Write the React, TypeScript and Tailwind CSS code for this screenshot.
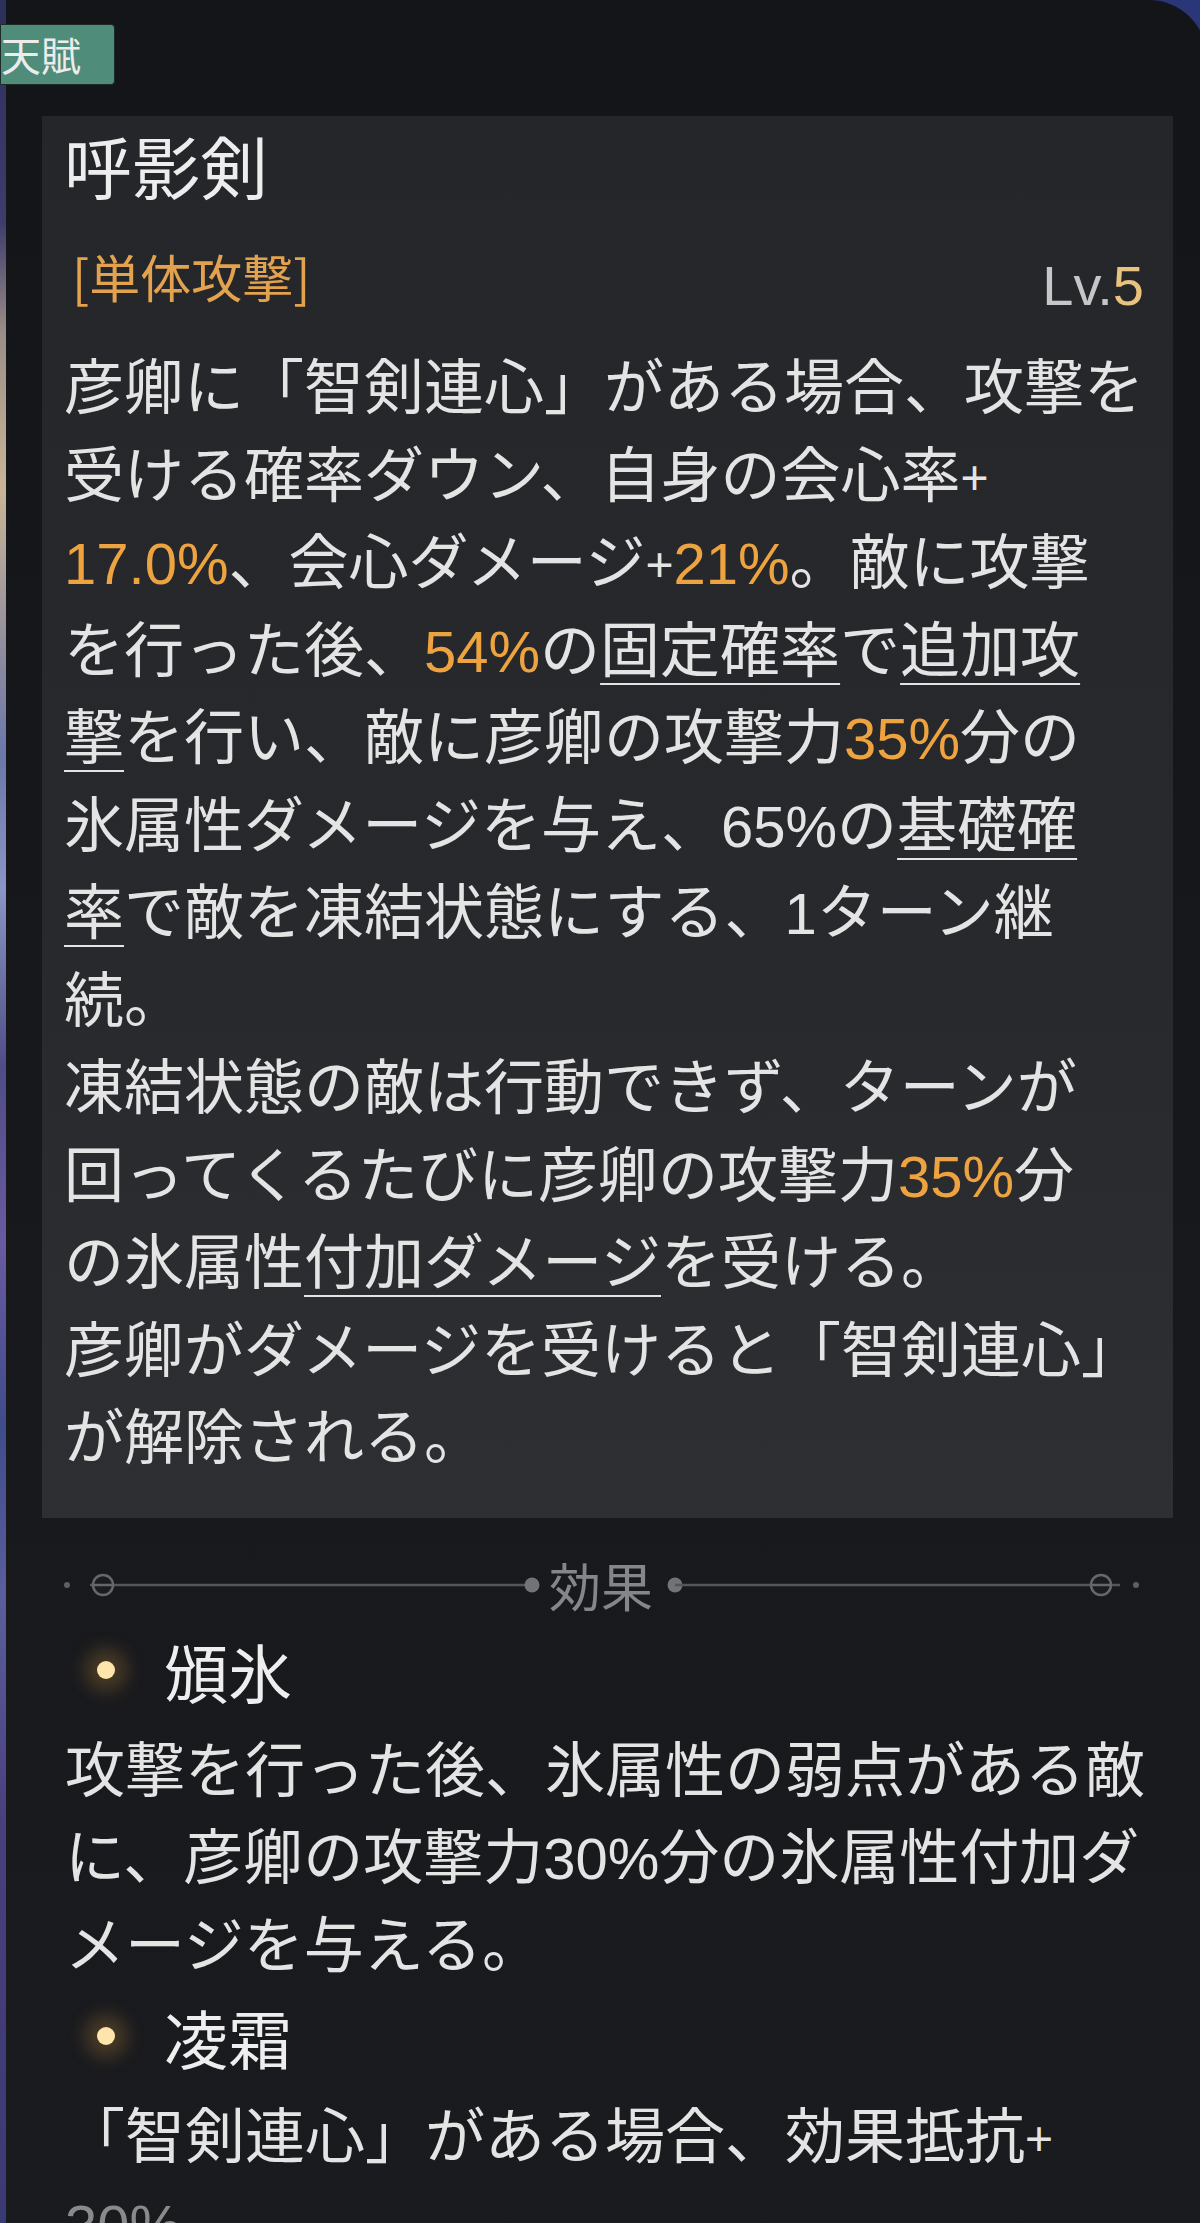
import React from "react";

type C = { children: React.ReactNode };

function N({ children, o }: { children: React.ReactNode; o?: boolean }) {
  return (
    <span
      className={
        o
          ? "font-[family-name:'Liberation_Sans',Arial,sans-serif] text-[58px] text-[#eda33f]"
          : "font-[family-name:'Liberation_Sans',Arial,sans-serif] text-[58px]"
      }
    >
      {children}
    </span>
  );
}

function P() {
  return (
    <span className="relative top-[-3px] font-[family-name:'Liberation_Sans',Arial,sans-serif] text-[48px]">+</span>
  );
}

function U({ children }: C) {
  return <span className="underline decoration-2 underline-offset-[11px]">{children}</span>;
}

function Line({ children }: C) {
  return <div className="h-[87.5px] leading-[87.5px] whitespace-nowrap">{children}</div>;
}

function Separator() {
  return (
    <div className="ml-[20px] mt-[47px] flex h-[40px] w-[1083px] items-center">
      <svg width="487" height="40" viewBox="0 0 487 40" className="shrink-0">
        <circle cx="5" cy="20" r="3" fill="#5e5f63" />
        <line x1="28" y1="20" x2="470" y2="20" stroke="#55565a" strokeWidth="2.5" />
        <circle cx="41" cy="20" r="10" fill="#1b1c20" stroke="#66676b" strokeWidth="2.5" />
        <line x1="31" y1="20" x2="51" y2="20" stroke="#66676b" strokeWidth="2.5" />
        <circle cx="470" cy="20" r="7.5" fill="#727377" />
      </svg>
      <span className="w-[104px] shrink-0 text-center text-[52px] leading-[40px] text-[#85868a]">効果</span>
      <svg width="492" height="40" viewBox="0 0 492 40" className="shrink-0">
        <circle cx="22" cy="20" r="7.5" fill="#727377" />
        <line x1="22" y1="20" x2="467" y2="20" stroke="#55565a" strokeWidth="2.5" />
        <circle cx="448" cy="20" r="10" fill="#1b1c20" stroke="#66676b" strokeWidth="2.5" />
        <line x1="438" y1="20" x2="458" y2="20" stroke="#66676b" strokeWidth="2.5" />
        <circle cx="483" cy="20" r="3" fill="#5e5f63" />
      </svg>
    </div>
  );
}

function ItemTitle({ children }: C) {
  return (
    <div className="flex h-[104px] items-center">
      <span className="ml-[32px] mr-[49px] h-[18px] w-[18px] shrink-0 rounded-full bg-[#ffe4ab] shadow-[0_0_18px_12px_rgba(190,140,60,0.3)]" />
      <span className="text-[64px] leading-[104px] text-[#eeeeee]">{children}</span>
    </div>
  );
}

export default function App() {
  return (
    <div className="relative flex h-[2223px] w-[1200px] overflow-hidden bg-[#2b3679] font-[family-name:'Noto_Sans_CJK_JP',sans-serif]">
      <div className="w-[6px] shrink-0 bg-[linear-gradient(180deg,#2c2f5a_0%,#3d3c6c_10%,#9c8e86_15%,#c9b596_22%,#8a88a0_30%,#6a78aa_34%,#8a96c4_40%,#4f4d86_48%,#6a5aa0_56%,#3e4c8c_64%,#5b5e9c_72%,#493f7d_82%,#3a3a72_100%)]" />
      <div className="relative flex flex-1 flex-col rounded-tr-[58px] bg-[linear-gradient(180deg,#141518_0%,#17181c_50%,#1a1b1f_100%)] pl-[36px] pr-[34px] pt-[116px]">
        {/* card */}
        <div className="flex flex-col bg-[linear-gradient(180deg,#25262a_0%,#28292d_60%,#2e2f33_100%)] pb-[41.5px] pl-[22px] pr-[29px] pt-[9px]">
          <div className="h-[80px] text-[68px] leading-[80px] text-[#ededed]">呼影剣</div>
          <div className="mt-[41px] flex h-[60px] justify-between">
            <span className="pl-[8px] text-[51px] leading-[60px] text-[#e3a24d]">[単体攻撃]</span>
            <span className="mt-[10px] font-[family-name:'Liberation_Sans',Arial,sans-serif] text-[56px] leading-[60px] text-[#c6c6c6]">
              Lv.<span className="text-[#e8c27f]">5</span>
            </span>
          </div>
          <div className="mt-[33px] text-[60px] text-[#e4e4e4]">
            <Line>彦卿に「智剣連心」がある場合、攻撃を</Line>
            <Line>
              受ける確率ダウン、自身の会心率<P />
            </Line>
            <Line>
              <N o>17.0%</N>、会心ダメージ<P />
              <N o>21%</N>。敵に攻撃
            </Line>
            <Line>
              を行った後、<N o>54%</N>の<U>固定確率</U>で<U>追加攻</U>
            </Line>
            <Line>
              <U>撃</U>を行い、敵に彦卿の攻撃力<N o>35%</N>分の
            </Line>
            <Line>
              氷属性ダメージを与え、<N>65%</N>の<U>基礎確</U>
            </Line>
            <Line>
              <U>率</U>で敵を凍結状態にする、<N>1</N>ターン継
            </Line>
            <Line>続。</Line>
            <Line>凍結状態の敵は行動できず、ターンが</Line>
            <Line>
              回ってくるたびに彦卿の攻撃力<N o>35%</N>分
            </Line>
            <Line>
              の氷属性<U>付加ダメージ</U>を受ける。
            </Line>
            <Line>彦卿がダメージを受けると「智剣連心」</Line>
            <Line>が解除される。</Line>
          </div>
        </div>

        <Separator />

        <div className="mt-[12.5px] flex flex-col pl-[23px] text-[60px] text-[#e4e4e4]">
          <ItemTitle>頒氷</ItemTitle>
          <Line>攻撃を行った後、氷属性の弱点がある敵</Line>
          <Line>
            に、彦卿の攻撃力<N>30%</N>分の氷属性付加ダ
          </Line>
          <Line>メージを与える。</Line>
          <ItemTitle>凌霜</ItemTitle>
          <Line>
            「智剣連心」がある場合、効果抵抗<P />
          </Line>
          <div className="h-[87.5px] leading-[87.5px] whitespace-nowrap text-[#8a8a8a]">
            <N>30%</N>
          </div>
        </div>
      </div>

      {/* tag */}
      <div className="absolute left-0 top-[24px] flex h-[61px] w-[115px] items-center rounded-r-[4px] border border-[#1d2a26] bg-[#4f8c7a] text-[40px] leading-[61px] text-[#ececec]">
        天賦
      </div>
    </div>
  );
}
